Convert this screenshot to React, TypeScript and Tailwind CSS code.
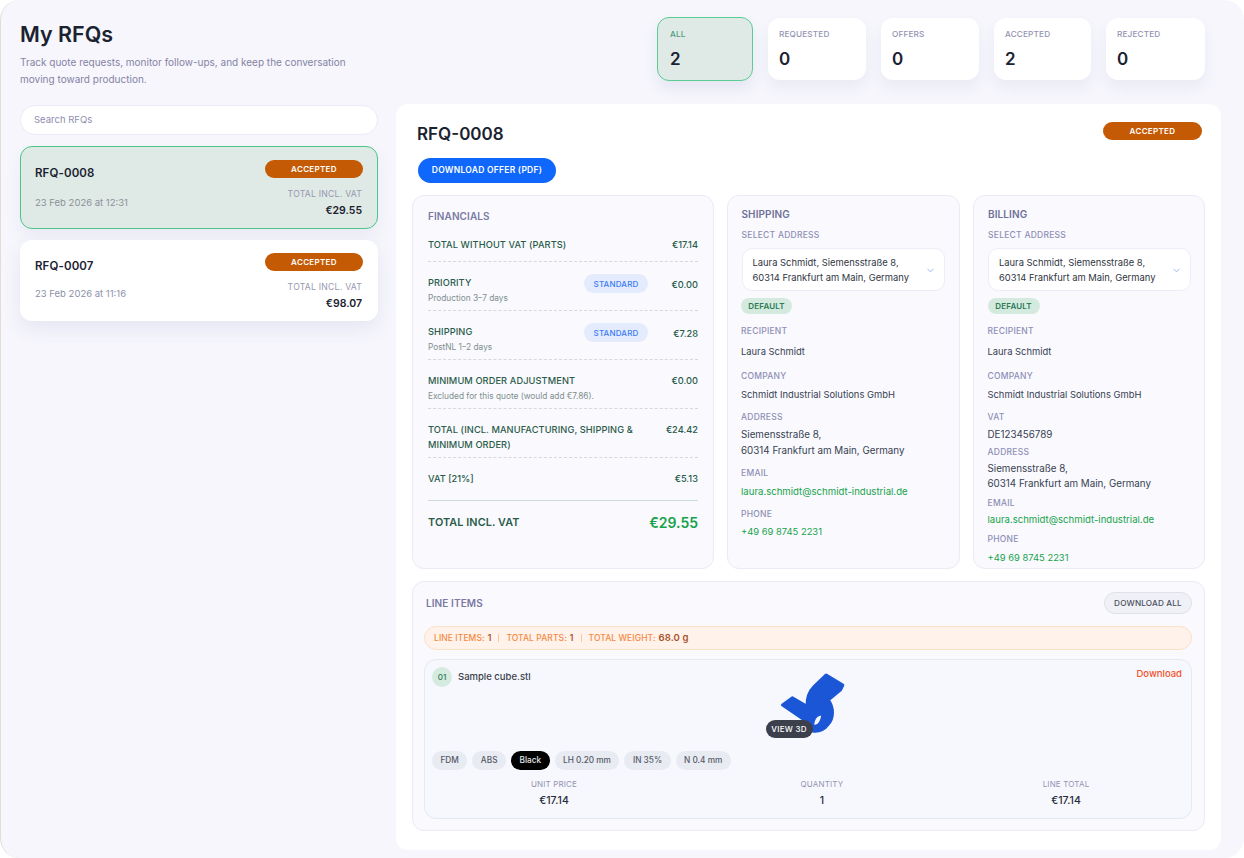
import React from 'react';
import { ChevronDown } from 'lucide-react';

const stats = [
  { label: 'ALL', value: '2', active: true, width: 'w-[96px]' },
  { label: 'REQUESTED', value: '0', width: 'w-[98px]' },
  { label: 'OFFERS', value: '0', width: 'w-[98px]' },
  { label: 'ACCEPTED', value: '2', width: 'w-[97px]' },
  { label: 'REJECTED', value: '0', width: 'w-[99px]' },
];

const chips = ['FDM', 'ABS', 'Black', 'LH 0.20 mm', 'IN 35%', 'N 0.4 mm'];

const AcceptedBadge = ({ className = '' }: { className?: string }) => (
  <span className={`flex h-[18px] items-center justify-center rounded-full bg-[#c45a04] text-[8px] font-semibold tracking-[0.04em] text-white ${className}`}>
    ACCEPTED
  </span>
);

const RfqCard = ({ id, date, total, active }: { id: string; date: string; total: string; active?: boolean }) => (
  <div className={`flex justify-between rounded-xl ${active ? 'h-[83px] border border-[#4cc587] bg-[#dfe9e5] pl-[14px] pr-[14px] pt-[13px] shadow-[0_8px_16px_rgba(90,100,160,0.08)]' : 'h-[81px] bg-white pl-[15px] pr-[15px] pt-[13px] shadow-[0_8px_18px_rgba(90,100,160,0.1)]'}`}>
    <div className="flex flex-col">
      <span className="mt-[5px] text-[11.5px] font-semibold leading-[16px] tracking-[0.01em] text-[#1b2230]">{id}</span>
      <span className={`text-[9.5px] leading-[14px] ${active ? 'mt-[15px] text-[#8d9099]' : 'mt-[13px] text-[#8d8fa8]'}`}>{date}</span>
    </div>
    <div className="flex flex-col items-end">
      <AcceptedBadge className="w-[98px]" />
      <span className="mr-[1px] mt-[10px] text-[8.6px] leading-[12px] tracking-[0.03em] text-[#9698ae]">TOTAL INCL. VAT</span>
      <span className="mr-[1px] mt-[3px] text-[10.5px] font-semibold leading-[15px] text-[#1b2230]">{total}</span>
    </div>
  </div>
);

const FinRow = ({ label, sub, value, chip, className = '' }: { label: React.ReactNode; sub?: string; value: string; chip?: boolean; className?: string }) => (
  <div className={`flex items-start justify-between border-b border-dashed border-[#d5d9de] ${className}`}>
    <div className="min-w-0">
      <div className="text-[9.25px] font-medium leading-[14.5px] tracking-[0.01em] text-[#2a5c49]">{label}</div>
      {sub && <div className="text-[8.3px] leading-[14px] text-[#7f8f8c]">{sub}</div>}
    </div>
    <div className="flex items-center">
      {chip && (
        <span className="mt-[-2px] flex h-[19px] w-[64px] items-center justify-center rounded-full bg-[#e3ebfd] text-[8px] font-medium tracking-[0.02em] text-[#3b7cf5]">
          STANDARD
        </span>
      )}
      <span className={`w-[50px] text-right text-[9.25px] font-medium text-[#2a5c49] ${chip ? 'leading-[17px]' : 'leading-[14.5px]'}`}>{value}</span>
    </div>
  </div>
);

const Label = ({ children, className = '' }: { children: React.ReactNode; className?: string }) => (
  <div className={`text-[8.5px] font-medium leading-[12px] tracking-[0.03em] text-[#8f8fb5] ${className}`}>{children}</div>
);

const Value = ({ children, className = 'text-[9.4px]', green }: { children: React.ReactNode; className?: string; green?: boolean }) => (
  <div className={`leading-[15.5px] ${green ? 'text-[#16a34a]' : 'text-[#374151]'} ${className}`}>{children}</div>
);

const AddressHead = ({ title, chipWidth }: { title: string; chipWidth: string }) => (
  <>
    <div className="ml-[0.5px] text-[10px] font-semibold leading-[14px] tracking-[0.01em] text-[#6f7199]">{title}</div>
    <Label className="ml-[0.5px] mt-[8px]">SELECT ADDRESS</Label>
    <div className="ml-[0.5px] mt-[7px] flex h-[43px] w-[203px] items-center justify-between rounded-[10px] border border-[#eceef7] bg-white pl-[10px] pr-[8px]">
      <div className="text-[9.4px] leading-[15px] text-[#2f3542]">
        Laura Schmidt, Siemensstraße 8,
        <br />
        60314 Frankfurt am Main, Germany
      </div>
      <ChevronDown size={11} strokeWidth={1.5} className="mt-[1px] shrink-0 text-[#7f95e6]" />
    </div>
    <div className={`mt-[7px] flex h-[16px] items-center justify-center rounded-full bg-[#d4eadf] text-[8px] font-semibold tracking-[0.02em] text-[#2c7a56] ${chipWidth}`}>
      DEFAULT
    </div>
  </>
);

const CubeModel = () => (
  <svg viewBox="120 60 205 195" className="h-[65px] w-[68px]">
    <path
      fill="#1a56d6"
      stroke="#1a56d6"
      strokeWidth="10"
      strokeLinejoin="round"
      d="M131 165 L160 144 L205 170 C204 148 208 128 226 110 L262 75 L312 105 L306 118 L268 150 C285 172 285 205 268 223 C255 240 238 245 222 243 L195 208 Z"
    />
    <path fill="#f7f8fd" d="M226 224 C236 226 244 214 247 198 C237 196 228 208 226 224 Z" />
  </svg>
);

export default function App() {
  return (
    <div className="h-[858px] w-[1244px] overflow-hidden bg-white font-['Inter',sans-serif]">
      <div className="flex h-full flex-col rounded-[20px] border-l border-[#e5dcd6] bg-[#f6f6fc] pl-[19px] pr-[23px] pt-[17px]">
        {/* header */}
        <div className="flex h-[87px] shrink-0 justify-between">
          <div>
            <h1 className="mt-[2px] text-[21.5px] font-semibold leading-[30px] text-[#1b2230]">My RFQs</h1>
            <p className="mt-[5px] w-[340px] text-[10px] leading-[17px] text-[#8583a4]">
              Track quote requests, monitor follow-ups, and keep the conversation moving toward production.
            </p>
          </div>
          <div className="mr-[16px] flex items-start gap-[15px]">
            {stats.map((s) => (
              <div
                key={s.label}
                className={`rounded-xl ${s.width} ${s.active ? 'h-[64px] border border-[#5ccb94] bg-[#dfeae6] pl-[12px] pt-[10px] shadow-[0_8px_14px_rgba(90,100,160,0.1)]' : 'mt-[1px] h-[62px] bg-white pl-[11px] pt-[10px] shadow-[0_8px_14px_rgba(90,100,160,0.08)]'}`}
              >
                <div className={`text-[8.2px] font-medium leading-[12px] tracking-[0.02em] ${s.active ? 'text-[#4f9a7c]' : 'text-[#9392b3]'}`}>{s.label}</div>
                <div className="mt-[8px] text-[17px] font-semibold leading-[22px] text-[#1b2230]">{s.value}</div>
              </div>
            ))}
          </div>
        </div>

        <div className="flex min-h-0 flex-1 gap-[18px]">
          {/* list */}
          <div className="flex w-[358px] shrink-0 flex-col">
            <div className="mt-[1px] flex h-[30px] items-center rounded-full border border-[#e9ebf6] bg-white pl-[13px] pt-[1px] text-[9.5px] text-[#8e8eb0]">
              Search RFQs
            </div>
            <div className="mt-[11px] flex flex-col gap-[11px]">
              <RfqCard id="RFQ-0008" date="23 Feb 2026 at 12:31" total="€29.55" active />
              <RfqCard id="RFQ-0007" date="23 Feb 2026 at 11:16" total="€98.07" />
            </div>
          </div>

          {/* detail */}
          <div className="mb-2 flex w-[825px] shrink-0 flex-col rounded-xl bg-white px-4 pt-[18px]">
            <div className="flex items-start justify-between">
              <h2 className="ml-[5px] text-[17px] font-semibold leading-[24px] text-[#1b2230]">RFQ-0008</h2>
              <AcceptedBadge className="mr-[3px] w-[99px]" />
            </div>
            <button className="ml-[6px] mt-[12px] flex h-[25px] w-[138px] items-center justify-center rounded-full bg-[#0f67fb] text-[8.5px] font-semibold tracking-[0.03em] text-white">
              DOWNLOAD OFFER (PDF)
            </button>

            <div className="mt-[12px] grid h-[374px] grid-cols-[302px_233px_232px] gap-[13px]">
              {/* financials */}
              <div className="rounded-xl border border-[#e9ebf5] bg-[#f9f9fe] pl-[15px] pr-[15px] pt-[13px]">
                <div className="text-[10px] font-semibold leading-[14px] tracking-[0.01em] text-[#7b7aa3]">FINANCIALS</div>
                <FinRow className="h-[39px] pt-[15px]" label="TOTAL WITHOUT VAT (PARTS)" value="€17.14" />
                <FinRow className="h-[49px] pt-[14px]" label="PRIORITY" sub="Production 3–7 days" value="€0.00" chip />
                <FinRow className="h-[49px] pt-[14px]" label="SHIPPING" sub="PostNL 1–2 days" value="€7.28" chip />
                <FinRow className="h-[49px] pt-[14px]" label="MINIMUM ORDER ADJUSTMENT" sub="Excluded for this quote (would add €7.86)." value="€0.00" />
                <FinRow
                  className="h-[49px] pt-[14px]"
                  label={
                    <>
                      TOTAL (INCL. MANUFACTURING, SHIPPING &amp;
                      <br />
                      MINIMUM ORDER)
                    </>
                  }
                  value="€24.42"
                />
                <div className="flex h-[43px] items-start justify-between border-b border-[#c9ded6] pt-[14px] text-[9.25px] font-medium leading-[14.5px] text-[#2a5c49]">
                  <span>VAT [21%]</span>
                  <span>€5.13</span>
                </div>
                <div className="flex items-center justify-between pt-[11px]">
                  <span className="text-[10.8px] font-semibold tracking-[0.01em] text-[#2a5c49]">TOTAL INCL. VAT</span>
                  <span className="text-[14px] font-semibold leading-[22px] text-[#16a34a]">€29.55</span>
                </div>
              </div>

              {/* shipping */}
              <div className="rounded-xl border border-[#e9ebf5] bg-[#f9f9fe] pl-[13px] pt-[11px]">
                <AddressHead title="SHIPPING" chipWidth="w-[51px]" />
                <Label className="mt-[11px]">RECIPIENT</Label>
                <Value className="mt-[7px] text-[9.4px]">Laura Schmidt</Value>
                <Label className="mt-[10px]">COMPANY</Label>
                <Value className="mt-[5px] text-[9.4px]">Schmidt Industrial Solutions GmbH</Value>
                <Label className="mt-[9px]">ADDRESS</Label>
                <Value className="mt-[4px] text-[9.8px]">
                  Siemensstraße 8,
                  <br />
                  60314 Frankfurt am Main, Germany
                </Value>
                <Label className="mt-[9px]">EMAIL</Label>
                <Value green className="mt-[5px] text-[9.6px]">laura.schmidt@schmidt-industrial.de</Value>
                <Label className="mt-[8px]">PHONE</Label>
                <Value green className="mt-[4px] text-[9.4px]">+49 69 8745 2231</Value>
              </div>

              {/* billing */}
              <div className="overflow-hidden rounded-xl border border-[#e9ebf5] bg-[#f9f9fe] pl-[13.5px] pt-[11px]">
                <AddressHead title="BILLING" chipWidth="w-[52px]" />
                <Label className="mt-[11px]">RECIPIENT</Label>
                <Value className="mt-[7px] text-[9.4px]">Laura Schmidt</Value>
                <Label className="mt-[10px]">COMPANY</Label>
                <Value className="mt-[5px] text-[9.4px]">Schmidt Industrial Solutions GmbH</Value>
                <Label className="mt-[9px]">VAT</Label>
                <Value className="mt-[4px] text-[9.8px]">DE123456789</Value>
                <Label className="mt-[3px]">ADDRESS</Label>
                <Value className="mt-[3px] text-[9.8px]">
                  Siemensstraße 8,
                  <br />
                  60314 Frankfurt am Main, Germany
                </Value>
                <Label className="mt-[5px]">EMAIL</Label>
                <Value green className="mt-[3px] text-[9.6px]">laura.schmidt@schmidt-industrial.de</Value>
                <Label className="mt-[6px]">PHONE</Label>
                <Value green className="mt-[5px] text-[9.4px]">+49 69 8745 2231</Value>
              </div>
            </div>

            {/* line items */}
            <div className="mt-[12px] h-[250px] rounded-xl border border-[#e9ebf5] bg-[#f9f9fe] pl-[11px] pr-3 pt-[10px]">
              <div className="flex items-center justify-between">
                <span className="ml-[2px] text-[10px] font-semibold tracking-[0.01em] text-[#7b7aa3]">LINE ITEMS</span>
                <button className="flex h-[22px] w-[88px] items-center justify-center rounded-full border border-[#dfe1ea] bg-[#f0f1f6] text-[8.2px] font-medium tracking-[0.02em] text-[#4b5060]">
                  DOWNLOAD ALL
                </button>
              </div>
              <div className="mt-[12px] flex h-[24px] items-center rounded-full border border-[#fde0c4] bg-[#fff2ea] pl-[9px] text-[8.5px] font-medium tracking-[0.01em] text-[#f58a45]">
                <span>LINE ITEMS:</span>
                <b className="ml-[3px] font-semibold text-[#a8512a]">1</b>
                <span className="mx-[7px] h-[8px] w-px bg-[#f5c9a8]" />
                <span>TOTAL PARTS:</span>
                <b className="ml-[3px] font-semibold text-[#a8512a]">1</b>
                <span className="mx-[7px] h-[8px] w-px bg-[#f5c9a8]" />
                <span>TOTAL WEIGHT:</span>
                <b className="ml-[3px] text-[9.5px] font-semibold text-[#a8512a]">68.0 g</b>
              </div>

              <div className="mt-[9px] h-[160px] rounded-xl border border-[#e6e8f2] bg-[#f7f8fd] pl-[7px] pr-[9px] pt-[7px]">
                <div className="grid grid-cols-[1fr_auto_1fr]">
                  <div className="flex items-start gap-[6px]">
                    <span className="flex h-[20px] w-[20px] items-center justify-center rounded-full bg-[#d6ebdf] text-[8px] font-medium text-[#2c7a56]">01</span>
                    <span className="text-[9.5px] font-medium leading-[19px] text-[#3a3f4b]">Sample cube.stl</span>
                  </div>
                  <div className="relative ml-[11px] mt-[3px] h-[65px] w-[68px]">
                    <CubeModel />
                    <span className="absolute left-[-13px] top-[50px] flex h-[18px] w-[47px] items-center justify-center rounded-full bg-[#3c3f4c] text-[8px] font-medium tracking-[0.03em] text-white">
                      VIEW 3D
                    </span>
                  </div>
                  <div className="text-right text-[9.5px] font-medium leading-[14px] text-[#f4512c]">Download</div>
                </div>
                <div className="mt-[16px] flex gap-[5px]">
                  {chips.map((c) => (
                    <span
                      key={c}
                      className={`flex h-[19px] items-center rounded-full px-[8.5px] text-[8.25px] font-medium ${c === 'Black' ? 'bg-black text-[#e5e7eb]' : 'bg-[#e9ebf2] text-[#555a68]'}`}
                    >
                      {c}
                    </span>
                  ))}
                </div>
                <div className="mt-[8px] grid grid-cols-[244px_292px_196px] text-center">
                  {[
                    ['UNIT PRICE', '€17.14'],
                    ['QUANTITY', '1'],
                    ['LINE TOTAL', '€17.14'],
                  ].map(([k, v]) => (
                    <div key={k}>
                      <div className="text-[8px] leading-[12px] tracking-[0.02em] text-[#9392b3]">{k}</div>
                      <div className="mt-[3px] text-[10.5px] font-medium leading-[15px] text-[#262b36]">{v}</div>
                    </div>
                  ))}
                </div>
              </div>
            </div>
          </div>
        </div>
      </div>
    </div>
  );
}
